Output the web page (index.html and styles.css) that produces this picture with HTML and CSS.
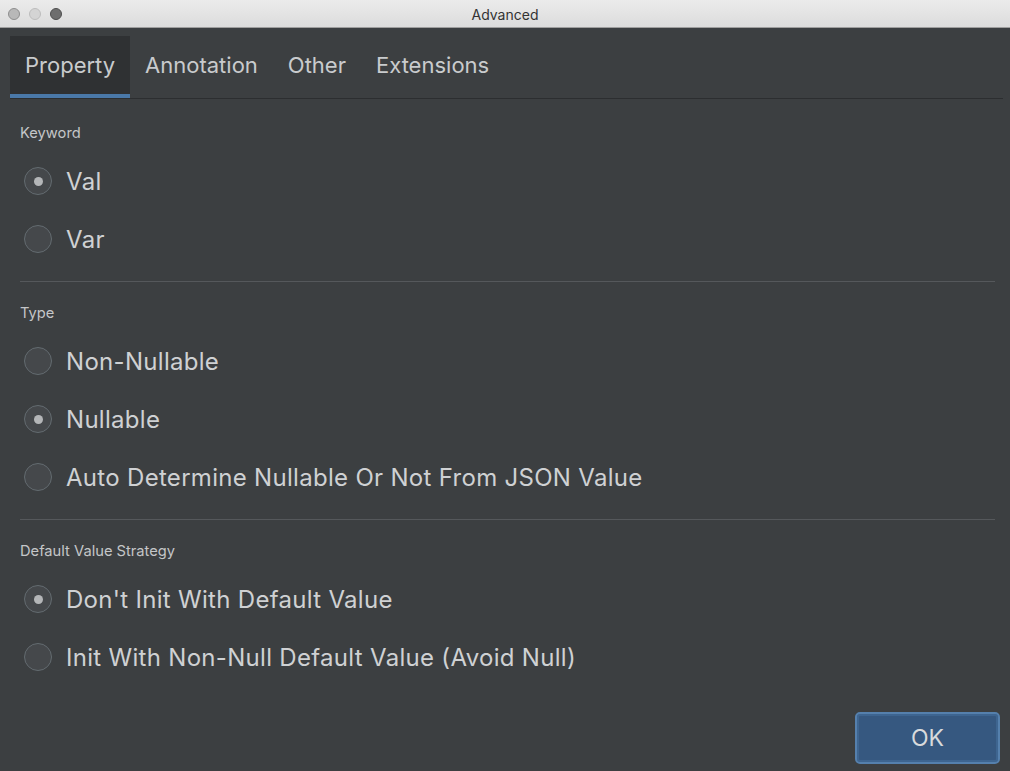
FILE: index.html
```html
<!DOCTYPE html>
<html>
<head>
<meta charset="utf-8">
<link rel="stylesheet" href="styles.css">
</head>
<body>
<div class="window">
  <div class="titlebar">
    <div class="lights">
      <span class="light l1"></span>
      <span class="light l2"></span>
      <span class="light l3"></span>
    </div>
    <div class="title">Advanced</div>
  </div>
  <div class="content">
    <div class="tabs">
      <div class="tab active">Property</div>
      <div class="tab">Annotation</div>
      <div class="tab">Other</div>
      <div class="tab">Extensions</div>
    </div>
    <div class="section first">
      <div class="label">Keyword</div>
      <div class="row"><span class="radio checked"></span><span class="text">Val</span></div>
      <div class="row"><span class="radio"></span><span class="text">Var</span></div>
    </div>
    <div class="sep"></div>
    <div class="section">
      <div class="label">Type</div>
      <div class="row"><span class="radio"></span><span class="text">Non-Nullable</span></div>
      <div class="row"><span class="radio checked"></span><span class="text">Nullable</span></div>
      <div class="row"><span class="radio"></span><span class="text">Auto Determine Nullable Or Not From JSON Value</span></div>
    </div>
    <div class="sep"></div>
    <div class="section">
      <div class="label">Default Value Strategy</div>
      <div class="row"><span class="radio checked"></span><span class="text">Don't Init With Default Value</span></div>
      <div class="row"><span class="radio"></span><span class="text">Init With Non-Null Default Value (Avoid Null)</span></div>
    </div>
    <div class="footer">
      <button class="ok">OK</button>
    </div>
  </div>
</div>
</body>
</html>
```

FILE: styles.css
```css
html, body {
  margin: 0;
  padding: 0;
  background: #3c3f41;
}
body {
  font-family: Inter, "Noto Sans", "Liberation Sans", sans-serif;
  width: 1010px;
  height: 771px;
  overflow: hidden;
}
.window {
  display: flex;
  flex-direction: column;
  height: 771px;
}
.titlebar {
  height: 27px;
  background: linear-gradient(#ebebeb, #dcdcdc);
  border-bottom: 1px solid #9f9f9f;
  display: flex;
  align-items: center;
  position: relative;
}
.lights {
  display: flex;
  gap: 9px;
  padding-left: 8px;
}
.light {
  width: 12px;
  height: 12px;
  border-radius: 50%;
  box-sizing: border-box;
}
.l1 { background: #b8b8b8; border: 1px solid #8e8e8e; }
.l2 { background: #d4d4d4; border: 1px solid #bdbdbd; }
.l3 { background: #6e6e6e; border: 1px solid #4e4e4e; }
.title {
  position: absolute;
  left: 0;
  right: 0;
  top: 1px;
  bottom: 0;
  display: flex;
  align-items: center;
  justify-content: center;
  font-size: 14px;
  color: #333333;
}
.content {
  flex: 1;
  display: flex;
  flex-direction: column;
  padding: 8px 10px 0 11px;
}
.tabs {
  display: flex;
  height: 62px;
  border-bottom: 1px solid #2c2e30;
  margin-left: -1px;
  margin-right: -3px;
}
.tab {
  padding: 0 15px 4px;
  display: flex;
  align-items: center;
  font-size: 22px;
  color: #c9cbcd;
  box-sizing: border-box;
}
.tab.active {
  background: #2f3133;
  border-bottom: 4px solid #4a78a8;
  padding-bottom: 0;
}
.section {
  padding: 21px 0 0 9px;
  display: flex;
  flex-direction: column;
}
.section.first {
  padding-top: 24px;
}
.label {
  height: 20px;
  line-height: 20px;
  font-size: 14.7px;
  color: #c4c6c8;
  margin-bottom: 9px;
}
.row {
  height: 58px;
  display: flex;
  align-items: center;
  gap: 14px;
  padding-left: 4px;
}
.radio {
  width: 28px;
  height: 28px;
  border-radius: 50%;
  box-sizing: border-box;
  border: 1.5px solid #636b70;
  background: #45484b;
  display: flex;
  align-items: center;
  justify-content: center;
  flex: none;
}
.radio.checked::after {
  content: "";
  width: 9px;
  height: 9px;
  border-radius: 50%;
  background: #b4b6b8;
}
.text {
  font-size: 24px;
  letter-spacing: 0.3px;
  color: #cfd1d3;
}
.sep {
  height: 1px;
  background: #55585b;
  margin: 13px 5px 0 9px;
}
.footer {
  flex: 1;
  display: flex;
  justify-content: flex-end;
  align-items: flex-end;
  padding-bottom: 7px;
}
.ok {
  width: 145px;
  height: 52px;
  border-radius: 5px;
  background: #365880;
  border: 2px solid #5580ad;
  box-shadow: inset 0 0 0 2px #3e6590;
  color: #d8dadc;
  font-family: Inter, "Noto Sans", "Liberation Sans", sans-serif;
  font-size: 23px;
  padding: 0;
}
```
